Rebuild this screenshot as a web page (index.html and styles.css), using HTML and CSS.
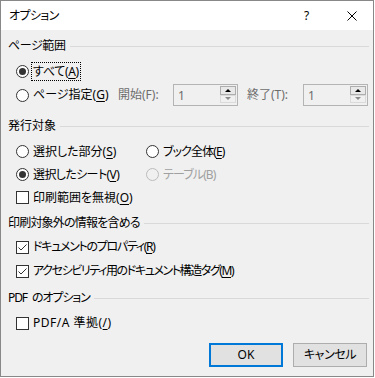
FILE: index.html
```html
<!DOCTYPE html>
<html lang="ja">
<head>
<meta charset="utf-8">
<title>オプション</title>
<link rel="stylesheet" href="styles.css">
</head>
<body>
<div class="dialog">
  <div class="titlebar">
    <span class="title t-06">オプション</span>
    <span class="help">?</span>
    <span class="close"><svg width="10" height="10" viewBox="0 0 10 10"><path d="M0.5 0.5L9.5 9.5M9.5 0.5L0.5 9.5" stroke="#000" stroke-width="1" fill="none"/></svg></span>
  </div>
  <div class="content">
    <section class="group g1">
      <div class="ghead"><span class="gtitle t-04">ページ範囲</span><span class="gline"></span></div>
      <div class="rows rows-24">
        <div class="row"><span class="radio on"></span><span class="lbl focus t-03">すべて(<u>A</u>)</span></div>
        <div class="row">
          <span class="radio"></span><span class="lbl w-range">ページ指定(<u>G</u>)</span>
          <span class="slabel s-start">開始(F):</span>
          <span class="spin"><span class="val">1</span><span class="btns"><span class="sbtn up"></span><span class="sbtn dn"></span></span></span>
          <span class="slabel s-end">終了(T):</span>
          <span class="spin"><span class="val">1</span><span class="btns"><span class="sbtn up"></span><span class="sbtn dn"></span></span></span>
        </div>
      </div>
    </section>

    <section class="group g2">
      <div class="ghead"><span class="gtitle">発行対象</span><span class="gline"></span></div>
      <div class="rows rows-23 grid2">
        <div class="row"><span class="radio"></span><span class="lbl">選択した部分(<u>S</u>)</span></div>
        <div class="row"><span class="radio"></span><span class="lbl t-09">ブック全体(<u>E</u>)</span></div>
        <div class="row"><span class="radio on"></span><span class="lbl t-06">選択したシート(<u>V</u>)</span></div>
        <div class="row"><span class="radio disabled"></span><span class="lbl dis t-09">テーブル(B)</span></div>
        <div class="row span2"><span class="check"></span><span class="lbl">印刷範囲を無視(<u>O</u>)</span></div>
      </div>
    </section>

    <section class="group g3">
      <div class="ghead"><span class="gtitle t-08">印刷対象外の情報を含める</span><span class="gline"></span></div>
      <div class="rows rows-24">
        <div class="row"><span class="check"><svg width="11" height="11" viewBox="0 0 11 11"><path d="M1.5 5.5L4 8L9.5 2.5" stroke="#333" stroke-width="1" fill="none"/></svg></span><span class="lbl t-13">ドキュメントのプロパティ(<u>R</u>)</span></div>
        <div class="row"><span class="check"><svg width="11" height="11" viewBox="0 0 11 11"><path d="M1.5 5.5L4 8L9.5 2.5" stroke="#333" stroke-width="1" fill="none"/></svg></span><span class="lbl t-14">アクセシビリティ用のドキュメント構造タグ(<u>M</u>)</span></div>
      </div>
    </section>

    <section class="group g4">
      <div class="ghead"><span class="gtitle t-11 ws">PDF のオプション</span><span class="gline"></span></div>
      <div class="rows rows-24">
        <div class="row"><span class="check"></span><span class="lbl t-p05">PDF/A 準拠(<u>/</u>)</span></div>
      </div>
    </section>

    <div class="buttons">
      <button class="btn default">OK</button>
      <button class="btn t-04">キャンセル</button>
    </div>
  </div>
</div>
</body>
</html>
```

FILE: styles.css
```css
html, body {
  margin: 0;
  padding: 0;
  background: #ffffff;
}

body {
  font-family: "Noto Sans", "Noto Sans CJK JP", sans-serif;
  font-size: 12px;
  line-height: 16px;
  color: #000;
  font-feature-settings: "palt";
}

.t-03 { letter-spacing: -0.3px; }
.t-04 { letter-spacing: -0.4px; }
.t-06 { letter-spacing: -0.6px; }
.t-08 { letter-spacing: -0.8px; }
.t-09 { letter-spacing: -0.9px; }
.t-11 { letter-spacing: -1.1px; }
.t-13 { letter-spacing: -1.3px; }
.t-14 { letter-spacing: -1.4px; }
.t-p05 { letter-spacing: 0.5px; }
.ws { word-spacing: 3px; }

.dialog {
  width: 374px;
  height: 377px;
  box-sizing: border-box;
  border: 1px solid #888888;
  background: #f0f0f0;
  display: flex;
  flex-direction: column;
}

.titlebar {
  height: 29px;
  background: #ffffff;
  display: flex;
  align-items: center;
  padding-left: 8px;
}

.title {
  flex: 1;
}

.help {
  width: 8px;
  margin-right: 35px;
  font-size: 12px;
}

.close {
  display: flex;
  width: 10px;
  height: 10px;
  margin-right: 16px;
}

.content {
  padding: 8px 4px 0 7px;
  display: flex;
  flex-direction: column;
}

.ghead {
  display: flex;
  align-items: center;
  height: 16px;
}

.gtitle {
  white-space: nowrap;
}

.gline {
  flex: 1;
  height: 1px;
  background: #d9d9d9;
  margin-left: 4px;
}

.g2 { margin-top: 11px; }
.g3 { margin-top: 6px; }
.g4 { margin-top: 7px; }

.rows {
  padding-left: 8px;
}

.g1 .rows { margin-top: 5px; }
.g2 .rows { margin-top: 6px; }
.g3 .rows { margin-top: 4px; }
.g4 .rows { margin-top: 5px; }

.rows-24 .row { height: 24px; }
.rows-23 .row { height: 23px; }

.grid2 {
  display: grid;
  grid-template-columns: 130px 1fr;
}

.span2 { grid-column: 1 / 3; }

.row {
  display: flex;
  align-items: center;
  white-space: nowrap;
}

.radio {
  width: 13px;
  height: 13px;
  box-sizing: border-box;
  border: 1px solid #333333;
  border-radius: 50%;
  background: #ffffff;
  margin-right: 4px;
  position: relative;
  flex: none;
}

.radio.on::after {
  content: "";
  position: absolute;
  left: 2px;
  top: 2px;
  width: 7px;
  height: 7px;
  border-radius: 50%;
  background: #333333;
}

.radio.disabled {
  border-color: #bcbcbc;
  background: #f0f0f0;
}

.check {
  width: 13px;
  height: 13px;
  box-sizing: border-box;
  border: 1px solid #333333;
  background: #ffffff;
  margin-right: 4px;
  flex: none;
  display: flex;
}

.lbl u {
  text-underline-offset: 2px;
}

.lbl.dis {
  color: #a0a0a0;
}

.focus {
  outline: 1px dotted #000;
  outline-offset: 1px;
  line-height: 15px;
}

.w-range {
  width: 85px;
}

.slabel {
  color: #6d6d6d;
  width: 55px;
}

.s-end {
  width: 56px;
  margin-left: 9px;
}

.spin {
  width: 65px;
  height: 22px;
  box-sizing: border-box;
  border: 1px solid #b4b4b4;
  background: #f0f0f0;
  display: flex;
  padding: 1px 1px 2px 4px;
}

.val {
  flex: 1;
  color: #6d6d6d;
  line-height: 19px;
}

.btns {
  width: 16px;
  display: flex;
  flex-direction: column;
}

.sbtn {
  flex: 1;
  box-sizing: border-box;
  display: flex;
  align-items: center;
  justify-content: center;
}

.sbtn.up {
  border: 1px solid #adadad;
  background: #e8e8e8;
}

.sbtn.dn {
  border: 1px solid #dadada;
  background: #f0f0f0;
}

.sbtn::after {
  content: "";
  width: 0;
  height: 0;
  border-left: 3px solid transparent;
  border-right: 3px solid transparent;
}

.sbtn.up::after {
  border-bottom: 3px solid #000;
}

.sbtn.dn::after {
  border-top: 3px solid #8a8a8a;
}

.buttons {
  display: flex;
  justify-content: flex-end;
  gap: 10px;
  margin-top: 8px;
  padding-right: 2px;
}

.btn {
  width: 74px;
  height: 24px;
  box-sizing: border-box;
  border: 1px solid #adadad;
  background: #e1e1e1;
  font: inherit;
  color: #000;
  padding: 0;
}

.btn.default {
  border: 2px solid #0078d7;
}
```
